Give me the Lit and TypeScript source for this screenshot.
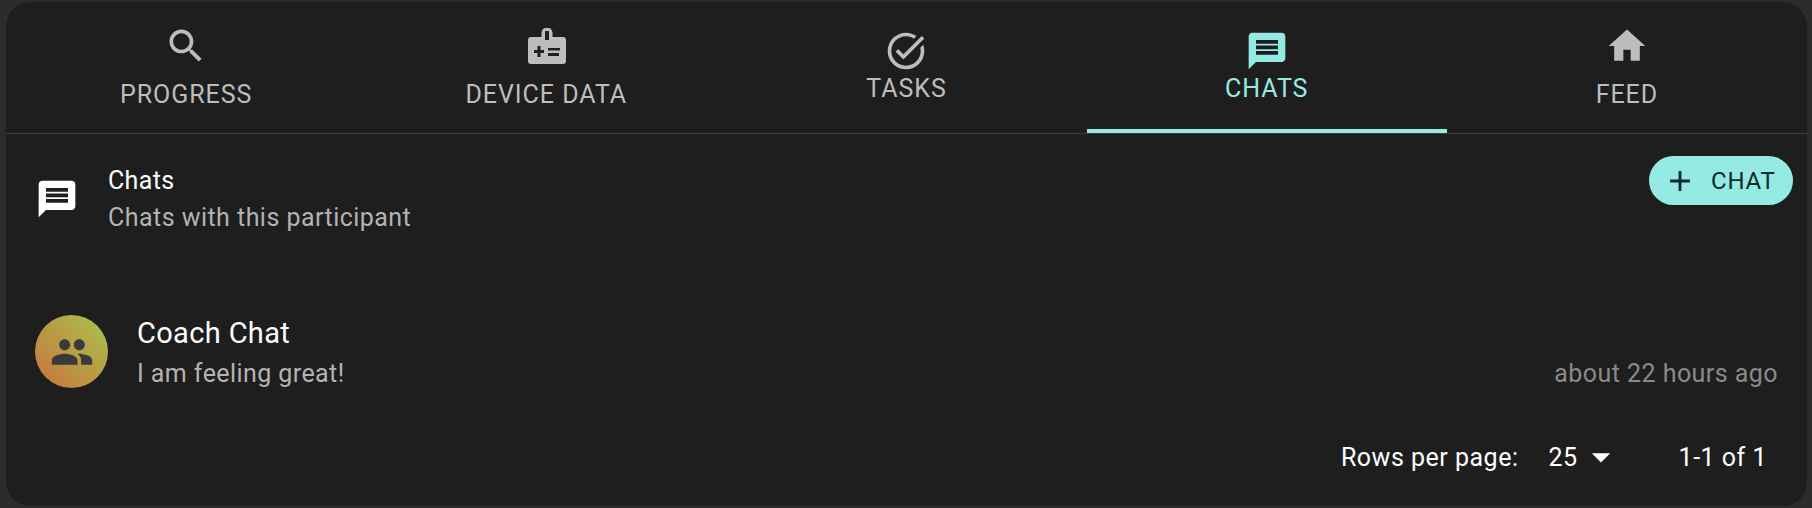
import { css, html, LitElement, svg, unsafeCSS } from "lit";
import { customElement } from "lit/decorators.js";

const ACCENT = unsafeCSS("#95ebe4");

const search = svg`<path d="M15.5 14h-.79l-.28-.27C15.41 12.59 16 11.11 16 9.5 16 5.91 13.09 3 9.5 3S3 5.91 3 9.5 5.91 16 9.5 16c1.61 0 3.09-.59 4.23-1.57l.27.28v.79l5 4.99L20.49 19l-4.99-5zm-6 0C7.01 14 5 11.99 5 9.5S7.01 5 9.5 5 14 7.01 14 9.5 11.99 14 9.5 14z"/>`;
const taskAlt = svg`<path d="M22 5.18 10.59 16.6l-4.24-4.24 1.41-1.41 2.83 2.83 10-10L22 5.18zM19.79 10.22c.13.57.21 1.17.21 1.78 0 4.42-3.58 8-8 8s-8-3.58-8-8 3.58-8 8-8c1.58 0 3.04.46 4.28 1.25l1.44-1.44C16.1 2.67 14.13 2 12 2 6.48 2 2 6.48 2 12s4.48 10 10 10 10-4.48 10-10c0-1.19-.22-2.33-.6-3.39l-1.61 1.61z"/>`;
const message = svg`<path d="M20 2H4c-1.1 0-1.99.9-1.99 2L2 22l4-4h14c1.1 0 2-.9 2-2V4c0-1.1-.9-2-2-2zm-2 12H6v-2h12v2zm0-3H6V9h12v2zm0-3H6V6h12v2z"/>`;
const home = svg`<path d="M10 20v-6h4v6h5v-8h3L12 3 2 12h3v8z"/>`;
const people = svg`<path d="M16 11c1.66 0 2.99-1.34 2.99-3S17.66 5 16 5s-3 1.34-3 3 1.34 3 3 3zm-8 0c1.66 0 2.99-1.34 2.99-3S9.66 5 8 5 5 6.34 5 8s1.34 3 3 3zm0 2c-2.33 0-7 1.17-7 3.5V19h14v-2.5c0-2.33-4.67-3.5-7-3.5zm8 0c-.29 0-.62.02-.97.05 1.16.84 1.97 1.97 1.97 3.45V19h6v-2.5c0-2.33-4.67-3.5-7-3.5z"/>`;
const plus = svg`<path d="M19 13h-6v6h-2v-6H5v-2h6V5h2v6h6v2z"/>`;
const caret = svg`<path d="M7 10l5 5 5-5z"/>`;

function icon(body: unknown, cls = "") {
  return html`<svg class="ic ${cls}" viewBox="0 0 24 24" fill="currentColor">${body}</svg>`;
}

// not a stock material glyph, drawn on a 38x36 grid
const deviceIcon = html`<svg class="badge" viewBox="0 0 38 36" fill="currentColor">
  <path fill-rule="evenodd" d="M13.5 9V5a5 5 0 0 1 11 0v4h10.5a3 3 0 0 1 3 3v21a3 3 0 0 1-3 3H3a3 3 0 0 1-3-3V12a3 3 0 0 1 3-3zM17 3v9h4V3zM9.5 18v4H6v3h3.5v4h3v-4H16v-3h-3.5v-4zM20 20v2.5h12V20zm0 5v3h11v-3z"/>
</svg>`;

const tabs = [
  { label: "PROGRESS", glyph: icon(search), short: false, active: false },
  { label: "DEVICE DATA", glyph: deviceIcon, short: false, active: false },
  { label: "TASKS", glyph: icon(taskAlt), short: true, active: false },
  { label: "CHATS", glyph: icon(message), short: true, active: true },
  { label: "FEED", glyph: icon(home), short: false, active: false },
];

@customElement("app-root")
export class AppRoot extends LitElement {
  static styles = css`
    :host {
      display: block;
      height: 508px;
      overflow: hidden;
      background: #2c2c2c;
      font-family: Roboto, "Liberation Sans", sans-serif;
      padding: 2px 5px 2px 6px;
      box-sizing: border-box;
    }

    .card {
      height: 504px;
      background: #1e1e1e;
      border-radius: 24px;
      overflow: hidden;
      color: #fff;
    }

    .tabs {
      display: grid;
      grid-template-columns: repeat(5, 1fr);
      height: 131px;
      border-bottom: 1px solid #3f3f3f;
    }

    .tab {
      display: flex;
      flex-direction: column;
      align-items: center;
      padding-top: 20px;
      color: #bdbdbd;
      box-sizing: border-box;
      height: 131px;
    }

    .tab.active {
      color: ${ACCENT};
      border-bottom: 4px solid ${ACCENT};
    }

    .slot {
      height: 48px;
      margin-bottom: 11px;
      display: flex;
      align-items: center;
      justify-content: center;
    }

    .slot.short {
      height: 47px;
      margin-bottom: 6px;
      align-items: flex-end;
    }

    .ic {
      width: 44px;
      height: 44px;
      display: block;
      flex: none;
    }

    .slot.short .ic {
      margin-bottom: -4px;
    }

    .badge {
      width: 38px;
      height: 36px;
      display: block;
      margin-left: 1px;
    }

    .label {
      font-size: 25px;
      line-height: 28px;
      font-weight: 450;
      letter-spacing: 0.95px;
    }

    .header {
      display: flex;
      align-items: flex-start;
      padding: 0 14px 0 29px;
    }

    .header .ic {
      margin-top: 43px;
      color: #fff;
    }

    .header-text {
      margin: 28px 0 0 29px;
      flex: 1;
    }

    .title {
      font-size: 25px;
      line-height: 37px;
      letter-spacing: 0.35px;
    }

    .sub {
      font-size: 25px;
      line-height: 37px;
      letter-spacing: 0.46px;
      color: #b3b3b3;
    }

    .add {
      display: flex;
      align-items: center;
      height: 49px;
      width: 144px;
      margin-top: 22px;
      padding-left: 14px;
      box-sizing: border-box;
      border-radius: 25px;
      background: ${ACCENT};
      color: #0d2a2a;
      font-size: 24px;
      font-weight: 450;
      letter-spacing: 0.8px;
    }

    .add .ic {
      width: 34px;
      height: 34px;
      margin: 0 14px 0 0;
      color: #0d2a2a;
    }

    .row {
      display: flex;
      margin-top: 77px;
      padding: 0 29px;
    }

    .avatar {
      width: 73px;
      height: 73px;
      margin-top: 2px;
      border-radius: 50%;
      display: flex;
      align-items: center;
      justify-content: center;
      color: #3a3a3a;
      background: linear-gradient(to top right, #c8733d, #aac44c);
    }

    .row-text {
      flex: 1;
      margin-left: 29px;
    }

    .name {
      font-size: 29px;
      line-height: 40px;
      letter-spacing: 0.35px;
    }

    .last {
      margin-top: 1px;
      font-size: 25px;
      line-height: 40px;
      letter-spacing: 0.42px;
      color: #b3b3b3;
    }

    .time {
      align-self: flex-end;
      font-size: 25px;
      line-height: 40px;
      letter-spacing: 0.45px;
      color: #8a8a8a;
    }

    .pager {
      display: flex;
      justify-content: flex-end;
      align-items: center;
      height: 40px;
      margin-top: 43px;
      padding-right: 40px;
      font-size: 25px;
      letter-spacing: 0.5px;
    }

    .rows {
      margin-right: 30px;
    }

    .pager .ic {
      width: 44px;
      height: 44px;
      margin: 0 56px 0 1px;
    }
  `;

  render() {
    return html`
      <div class="card">
        <div class="tabs">
          ${tabs.map(
            (t) => html`<div class="tab ${t.active ? "active" : ""}">
              <div class="slot ${t.short ? "short" : ""}">${t.glyph}</div>
              <div class="label">${t.label}</div>
            </div>`
          )}
        </div>

        <div class="header">
          ${icon(message)}
          <div class="header-text">
            <div class="title">Chats</div>
            <div class="sub">Chats with this participant</div>
          </div>
          <div class="add">${icon(plus)}CHAT</div>
        </div>

        <div class="row">
          <div class="avatar">${icon(people)}</div>
          <div class="row-text">
            <div class="name">Coach Chat</div>
            <div class="last">I am feeling great!</div>
          </div>
          <div class="time">about 22 hours ago</div>
        </div>

        <div class="pager">
          <span class="rows">Rows per page:</span>
          <span>25</span>
          ${icon(caret)}
          <span>1-1 of 1</span>
        </div>
      </div>
    `;
  }
}
